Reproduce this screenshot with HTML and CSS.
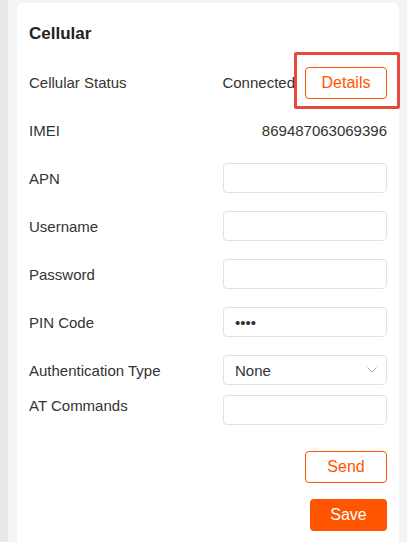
FILE: index.html
```html
<!DOCTYPE html>
<html>
<head>
<meta charset="utf-8">
<link rel="stylesheet" href="styles.css">
</head>
<body>
<div class="strip"></div>
<div class="main">
  <div class="card">
    <div class="title">Cellular</div>
    <div class="row">
      <div class="label">Cellular Status</div>
      <div class="status">
        <span class="value">Connected</span>
        <button class="btn-outline details">Details</button>
        <div class="highlight"></div>
      </div>
    </div>
    <div class="row">
      <div class="label">IMEI</div>
      <div class="value">869487063069396</div>
    </div>
    <div class="row">
      <div class="label">APN</div>
      <input class="field" type="text" value="">
    </div>
    <div class="row">
      <div class="label">Username</div>
      <input class="field" type="text" value="">
    </div>
    <div class="row">
      <div class="label">Password</div>
      <input class="field" type="password" value="">
    </div>
    <div class="row">
      <div class="label">PIN Code</div>
      <input class="field" type="password" value="1234">
    </div>
    <div class="row">
      <div class="label">Authentication Type</div>
      <div class="field select">
        <span>None</span>
        <svg class="chev" width="10" height="6" viewBox="0 0 10 6"><path d="M0.5 0.5 L5 5 L9.5 0.5" fill="none" stroke="#b0b0b0" stroke-width="1"/></svg>
      </div>
    </div>
    <div class="row top">
      <div class="label">AT Commands</div>
      <input class="field" type="text" value="">
    </div>
    <div class="actions">
      <button class="btn-outline send">Send</button>
      <button class="btn-primary">Save</button>
    </div>
  </div>
</div>
</body>
</html>
```
FILE: styles.css
```css
* { box-sizing: border-box; }
html, body { margin: 0; padding: 0; height: 100%; }
body {
  display: flex;
  font-family: "Liberation Sans", Arial, sans-serif;
  color: #333;
  background: #f4f4f4;
  overflow: hidden;
}
.strip {
  width: 8px;
  flex: none;
  background: #e8e8e8;
}
.main {
  flex: 1;
  padding: 3px 8px 0 9px;
  background: #f4f4f4;
}
.card {
  background: #fff;
  border-radius: 6px;
  padding: 19px 12px 40px 12px;
  min-height: 600px;
}
.title {
  font-size: 17px;
  font-weight: bold;
  height: 24px;
  line-height: 24px;
  color: #222;
  margin-bottom: 12px;
}
.row {
  height: 48px;
  display: flex;
  align-items: center;
  justify-content: space-between;
  font-size: 15px;
}
.row.top {
  align-items: flex-start;
  height: auto;
  padding-top: 1px;
}
.row.top .label { line-height: 22px; }
.label { color: #333; }
.value { color: #333; }
.status {
  position: relative;
  display: flex;
  align-items: center;
}
.status .value { margin-right: 10px; }
.btn-outline {
  font-family: inherit;
  font-size: 16px;
  color: #ff5500;
  background: #fff;
  border: 1px solid #ff5500;
  border-radius: 4px;
  width: 82px;
  height: 32px;
  padding: 0;
}
.details { margin-top: 1px; }
.highlight {
  position: absolute;
  right: -13px;
  top: -14px;
  width: 106px;
  height: 57px;
  border: 3px solid #e8473f;
  border-radius: 2px;
}
.field {
  width: 164px;
  height: 30px;
  border: 1px solid #e2e2e2;
  border-radius: 4px;
  font-family: inherit;
  font-size: 15px;
  color: #333;
  padding: 0 11px;
  outline: none;
  background: #fff;
}
.select {
  display: flex;
  align-items: center;
  justify-content: space-between;
  padding-right: 9px;
}
.actions {
  display: flex;
  flex-direction: column;
  align-items: flex-end;
  gap: 16px;
  margin-top: 26px;
}
.btn-primary {
  font-family: inherit;
  font-size: 16px;
  color: #fff;
  background: #ff5500;
  border: none;
  border-radius: 4px;
  width: 77px;
  height: 32px;
  padding: 0;
}
```
